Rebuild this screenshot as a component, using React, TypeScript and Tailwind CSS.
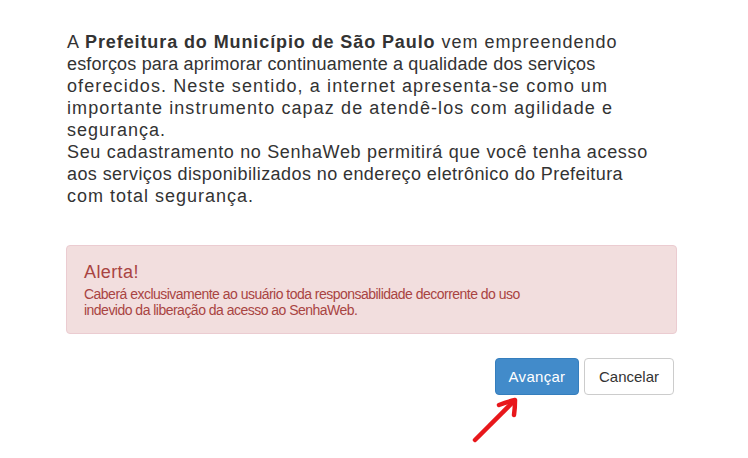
import React from "react";

export default function App() {
  return (
    <div
      className="w-[748px] h-[458px] bg-white relative overflow-hidden"
      style={{ fontFamily: '"Liberation Sans", Arial, sans-serif' }}
    >
      <div className="pl-[66px] pt-[31px] w-[677px]">
        <p className="w-[620px] whitespace-nowrap text-[18px] leading-[22px] tracking-[1px] text-[#333333] pl-[1px]">
          A <b className="tracking-[0.9px]">Prefeitura do Município de São Paulo</b> vem empreendendo
          <br />
          <span className="tracking-[0.18px]">esforços para aprimorar continuamente a qualidade dos serviços</span>
          <br />
          <span className="tracking-[1.1px]">oferecidos. Neste sentido, a internet apresenta-se como um</span>
          <br />
          <span className="tracking-[1.1px]">importante instrumento capaz de atendê-los com agilidade e</span>
          <br />
          segurança.
          <br />
          <span className="tracking-[0.67px]">Seu cadastramento no SenhaWeb permitirá que você tenha acesso</span>
          <br />
          <span className="tracking-[0.42px]">aos serviços disponibilizados no endereço eletrônico do Prefeitura</span>
          <br />
          com total segurança.
        </p>

        <div className="mt-[38px] h-[89px] rounded-[4px] border border-[#ebccd1] bg-[#f2dede] text-[#a94442] pl-[17px] pt-[15px]">
          <div className="text-[18px] leading-[22px] tracking-[0.4px]">Alerta!</div>
          <p className="mt-[3px] w-[470px] text-[14px] leading-[16px] tracking-[-0.52px]">
            Caberá exclusivamente ao usuário toda responsabilidade decorrente do uso indevido da
            liberação da acesso ao SenhaWeb.
          </p>
        </div>

        <div className="mt-[24px] flex justify-end gap-[5px] pr-[3px]">
          <button className="h-[37px] w-[84px] rounded-[4px] border border-[#357ebd] bg-[#428bca] text-white text-[15px] tracking-[0.3px] pt-[1px]">
            Avançar
          </button>
          <button className="h-[37px] w-[90px] rounded-[4px] border border-[#cccccc] bg-white text-[#333333] text-[15px] pt-[1px]">
            Cancelar
          </button>
        </div>
      </div>

      {/* red annotation arrow pointing at the primary button */}
      <svg className="absolute left-0 top-0" width="748" height="458" viewBox="0 0 748 458">
        <g stroke="#e8171b" strokeWidth="4.5" strokeLinecap="round" strokeLinejoin="round" fill="none">
          <path d="M475 440 Q495 420 514 401" />
          <path d="M499 405 Q507 402 515 400 Q515 408 514 415" />
        </g>
      </svg>
    </div>
  );
}
